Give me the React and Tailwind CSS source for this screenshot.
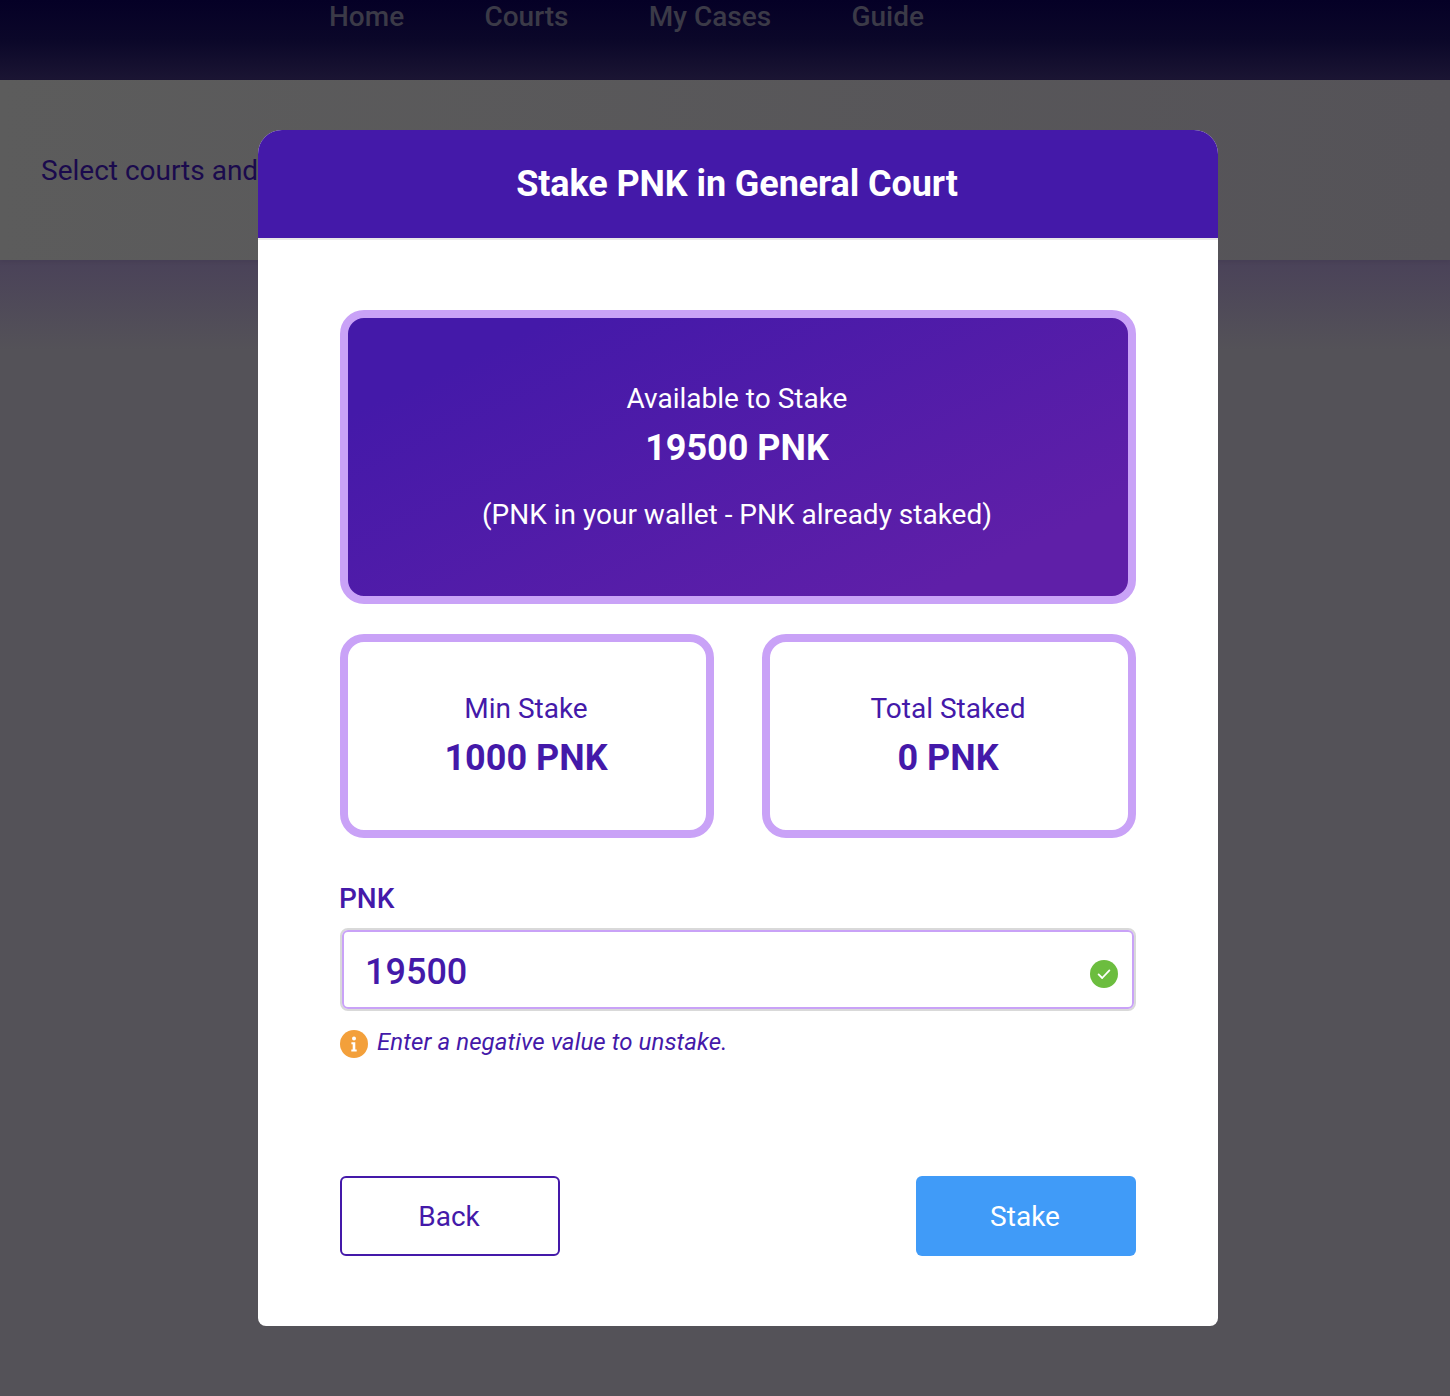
import React from "react";

function Stat({ label, value }) {
  return (
    <div className="h-[204px] rounded-[24px] border-[8px] border-[#c9a2f7] bg-white flex flex-col items-center pt-[49px] pr-[2px] text-[#4419a9]">
      <div className="text-[28px] leading-[36px]">{label}</div>
      <div className="text-[36px] leading-[48px] mt-[7px] font-bold">{value}</div>
    </div>
  );
}

export default function App() {
  return (
    <div className="relative h-[1396px] w-full overflow-hidden font-['Roboto',sans-serif] bg-[linear-gradient(180deg,#4a4259_260px,#545258_350px,#545258)]">
      <header className="h-[80px] bg-[linear-gradient(180deg,#050026,#0b0729_50%,#1b1533)] pl-[329px] flex gap-[80.3px] items-start">
        <span className="text-[28px] leading-[33px] font-medium text-[#3b3a47]">Home</span>
        <span className="text-[28px] leading-[33px] font-medium text-[#3b3a47]">Courts</span>
        <span className="text-[28px] leading-[33px] font-medium text-[#3b3a47]">My Cases</span>
        <span className="text-[28px] leading-[33px] font-medium text-[#3b3a47]">Guide</span>
      </header>
      <section className="h-[180px] bg-[linear-gradient(90deg,#5c5c5c,#555358)] pl-[41px] pt-[73px] shadow-[0_2px_4px_rgba(0,0,0,0.06)]">
        <p className="text-[28px] leading-[36px] text-[#1a0a4d]">Select courts and</p>
      </section>

      <div className="absolute left-[258px] top-[130px] w-[960px] h-[1196px] rounded-t-[24px] rounded-b-[8px] bg-white overflow-hidden">
        <div className="h-[110px] bg-[#4419a9] border-b-[2px] border-[#e8e8e8] flex items-center justify-center box-border pr-[2px]">
          <h1 className="text-[36px] leading-[48px] font-bold text-white tracking-[-0.1px]">Stake PNK in General Court</h1>
        </div>
        <div className="px-[82px] pt-[70px]">
          <div className="h-[294px] rounded-[24px] border-[8px] border-[#c9a2f7] bg-[linear-gradient(155deg,#4419a9_15%,#5f1fa8_85%)] flex flex-col items-center text-white pt-[63px] pr-[2px]">
            <div className="text-[28px] leading-[36px]">Available to Stake</div>
            <div className="text-[36px] leading-[48px] mt-[7px] font-bold">19500 PNK</div>
            <div className="text-[28px] leading-[36px] mt-[25px]">(PNK in your wallet - PNK already staked)</div>
          </div>
          <div className="grid grid-cols-2 gap-[48px] mt-[30px]">
            <Stat label="Min Stake" value="1000 PNK" />
            <Stat label="Total Staked" value="0 PNK" />
          </div>
          <label className="block mt-[44px] -ml-[1px] text-[28px] leading-[34px] font-medium text-[#4419a9]">PNK</label>
          <div className="relative mt-[12px] h-[83px] rounded-[8px] border-[2px] border-[#d9d9d9] bg-white">
            <div className="h-full rounded-[6px] border-[2px] border-[#c9a2f7] pl-[21px] pt-[5px] flex items-center text-[36px] font-medium text-[#4419a9]">
              19500
            </div>
            <svg className="absolute right-[16px] top-[30px]" width="28" height="28" viewBox="0 0 28 28">
              <circle cx="14" cy="14" r="14" fill="#6cbd3f" />
              <path d="M8.6 14.4l3.6 3.6 7.2-7.6" fill="none" stroke="#fff" strokeWidth="1.8" strokeLinecap="round" strokeLinejoin="round" />
            </svg>
          </div>
          <div className="flex items-start mt-[14px] h-[35px]">
            <svg width="28" height="28" viewBox="0 0 28 28" className="shrink-0 mt-[5px]">
              <circle cx="14" cy="14" r="14" fill="#f3a03b" />
              <circle cx="14" cy="8.6" r="2" fill="#fff" />
              <path d="M11.4 12.2h3.9v7.4h1.4v2h-5.4v-2h1.4v-5.4h-1.3z" fill="#fff" />
            </svg>
            <span className="ml-[9px] text-[24px] leading-[34px] tracking-[0.1px] italic text-[#4419a9]">Enter a negative value to unstake.</span>
          </div>
          <div className="flex justify-between mt-[116px]">
            <button className="w-[220px] h-[80px] rounded-[6px] border-[2px] border-[#4419a9] bg-white text-[28px] text-[#4419a9] pr-[2px] pt-[2px]">Back</button>
            <button className="w-[220px] h-[80px] rounded-[6px] bg-[#409bf8] text-[28px] text-white pr-[2px] pt-[2px]">Stake</button>
          </div>
        </div>
      </div>
    </div>
  );
}
